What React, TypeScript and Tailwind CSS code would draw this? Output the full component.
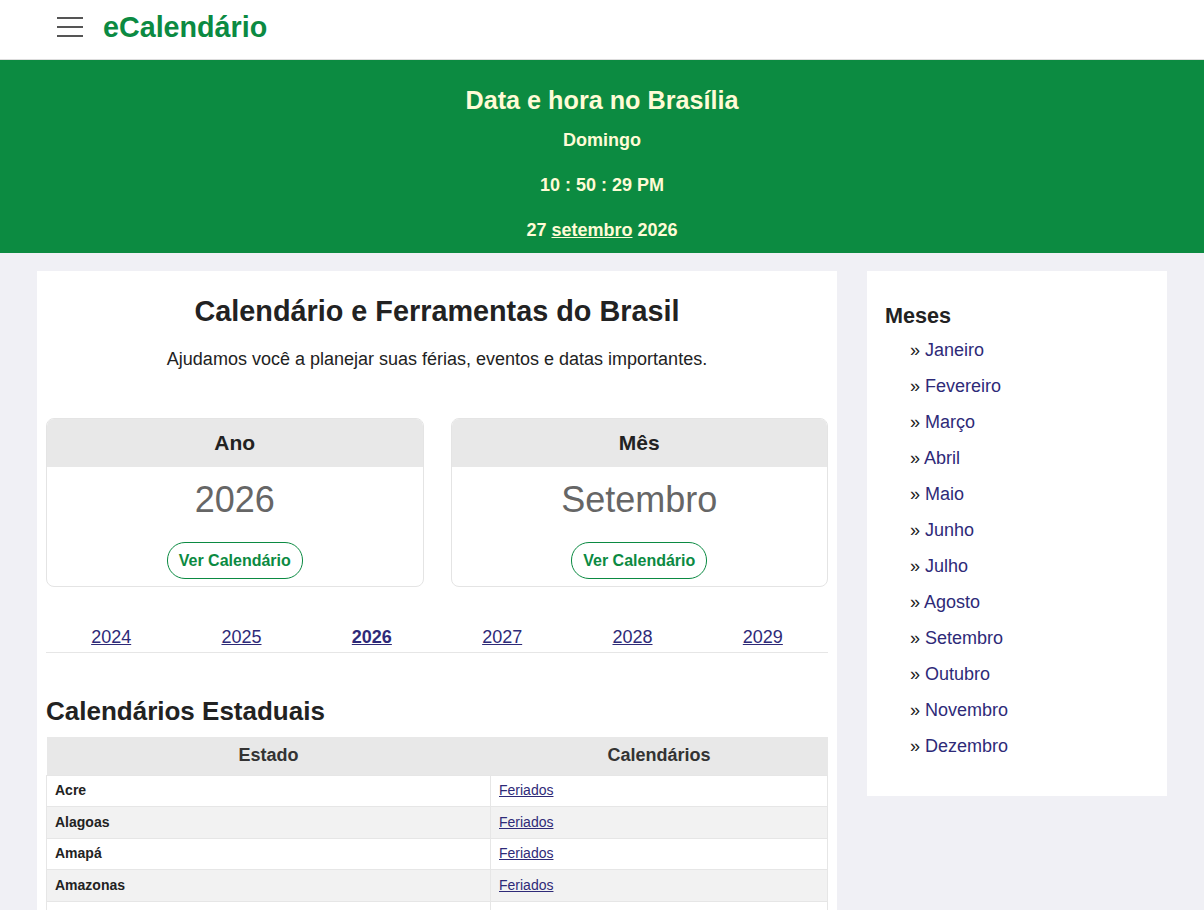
import React from 'react';

const years = ['2024', '2025', '2026', '2027', '2028', '2029'];

const months = [
  'Janeiro',
  'Fevereiro',
  'Março',
  'Abril',
  'Maio',
  'Junho',
  'Julho',
  'Agosto',
  'Setembro',
  'Outubro',
  'Novembro',
  'Dezembro',
];

const states = ['Acre', 'Alagoas', 'Amapá', 'Amazonas', 'Bahia'];

function Hamburger() {
  return (
    <div className="flex flex-col gap-[7px] w-[26px]">
      <span className="block h-[2px] bg-[#555]" />
      <span className="block h-[2px] bg-[#555]" />
      <span className="block h-[2px] bg-[#555]" />
    </div>
  );
}

function ToolCard({ title, value }: { title: string; value: string }) {
  return (
    <div className="flex-1 rounded-lg border border-[#e4e4e4] overflow-hidden bg-white">
      <div className="bg-[#e8e8e8] h-[48px] flex items-center justify-center text-[21px] font-bold text-[#222]">
        {title}
      </div>
      <div className="flex flex-col items-center pt-[11px] pb-[7px]">
        <div className="text-[36px] leading-[44px] text-[#666]">{value}</div>
        <button className="mt-[20px] h-[37px] px-[11px] rounded-[18px] border border-[#0b8a42] text-[#0b8a42] font-bold text-[16px]">
          Ver Calendário
        </button>
      </div>
    </div>
  );
}

export default function App() {
  return (
    <div className="min-h-[910px] bg-[#f0f0f5] font-['Liberation_Sans',Arial,sans-serif] text-[#222]">
      {/* Top bar */}
      <header className="h-[60px] bg-white border-b border-[#ddd] flex items-center pl-[57px] pb-[5px] gap-[20px]">
        <Hamburger />
        <span className="text-[28.7px] font-bold text-[#0b8a42] leading-none">eCalendário</span>
      </header>

      {/* Date banner */}
      <section className="bg-[#0c8b41] text-[#fffbd6] text-center font-bold h-[193px] pt-[24px]">
        <h1 className="text-[25.2px] leading-[32px]">Data e hora no Brasília</h1>
        <p className="text-[18px] leading-[22px] mt-[13px]">Domingo</p>
        <p className="text-[18px] leading-[22px] mt-[23px]">10 : 50 : 29 PM</p>
        <p className="text-[18px] leading-[22px] mt-[23px]">
          27 <span className="underline">setembro</span> 2026
        </p>
      </section>

      {/* Body */}
      <div className="flex items-start gap-[30px] pl-[37px] pt-[18px]">
        {/* Main card */}
        <main className="w-[800px] bg-white px-[9px] pt-[22px] pb-[20px]">
          <h2 className="text-center text-[28.8px] leading-[36px] font-bold">
            Calendário e Ferramentas do Brasil
          </h2>
          <p className="text-center text-[18px] leading-[22px] mt-[19px]">
            Ajudamos você a planejar suas férias, eventos e datas importantes.
          </p>

          <div className="flex gap-[27px] mt-[48px]">
            <ToolCard title="Ano" value="2026" />
            <ToolCard title="Mês" value="Setembro" />
          </div>

          <div className="grid grid-cols-6 mt-[39px] border-b border-[#e6e6e6] pb-[4px] text-[18px] leading-[22px]">
            {years.map((y) => (
              <a
                key={y}
                href="#"
                className={`text-center underline text-[#2e2a78] ${y === '2026' ? 'font-bold' : ''}`}
              >
                {y}
              </a>
            ))}
          </div>

          <h3 className="text-[26px] leading-[32px] font-bold mt-[42px]">Calendários Estaduais</h3>

          <table className="w-full mt-[10px] border-collapse">
            <thead>
              <tr className="bg-[#e8e8e8] h-[38px] text-[18px]">
                <th className="w-[444px] font-bold text-[#333]">Estado</th>
                <th className="font-bold text-[#333]">Calendários</th>
              </tr>
            </thead>
            <tbody>
              {states.map((s, i) => (
                <tr key={s} className={`h-[31.5px] text-[14px] ${i % 2 === 1 ? 'bg-[#f2f2f2]' : 'bg-white'}`}>
                  <td className="border border-[#e6e6e6] px-[8px] font-bold text-[#222]">{s}</td>
                  <td className="border border-[#e6e6e6] px-[8px]">
                    <a href="#" className="underline text-[#2e2a78]">Feriados</a>
                  </td>
                </tr>
              ))}
            </tbody>
          </table>
        </main>

        {/* Sidebar */}
        <aside className="w-[300px] bg-white pl-[18px] pt-[32px] pb-[32px]">
          <h4 className="text-[21.6px] leading-[26px] font-bold">Meses</h4>
          <ul className="pl-[25px] mt-[3px]">
            {months.map((m) => (
              <li key={m} className="text-[18px] leading-[36px]">
                <span className="text-[#222]">» </span>
                <a href="#" className="text-[#2e2a78]">{m}</a>
              </li>
            ))}
          </ul>
        </aside>
      </div>
    </div>
  );
}
